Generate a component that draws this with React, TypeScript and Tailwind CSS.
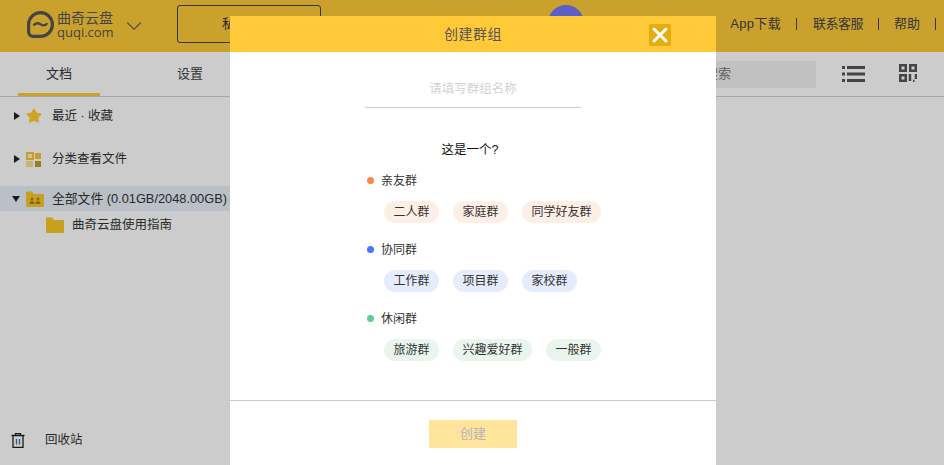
import { Star, ChevronDown, X } from "lucide-react";

const groups = [
  {
    name: "亲友群",
    dot: "bg-[#ff8844]",
    chip: "bg-[#fdefe6]",
    items: [
      ["二人群", "w-[55px]"],
      ["家庭群", "w-[55px]"],
      ["同学好友群", "w-[79px]"],
    ],
  },
  {
    name: "协同群",
    dot: "bg-[#4477ff]",
    chip: "bg-[#e4ecfd]",
    items: [
      ["工作群", "w-[55px]"],
      ["项目群", "w-[55px]"],
      ["家校群", "w-[55px]"],
    ],
  },
  {
    name: "休闲群",
    dot: "bg-[#5ccf8f]",
    chip: "bg-[#e8f6ee]",
    items: [
      ["旅游群", "w-[55px]"],
      ["兴趣爱好群", "w-[79px]"],
      ["一般群", "w-[55px]"],
    ],
  },
];

function Logo() {
  return (
    <div className="mt-[11px] flex items-start gap-[3px] self-start">
      <svg width="27" height="27" viewBox="0 0 27 27" fill="none" stroke="#555" strokeWidth="3.2">
        <path d="M13.500 1.600c6.600 0 11.900 5.300 11.900 11.900s-5.300 11.900-11.900 11.900H6a4.400 4.400 0 0 1-4.400-4.400v-7.500C1.600 6.900 6.900 1.600 13.500 1.600Z" />
        <path d="M6.500 14.500c2-2.800 4.300-2.800 7-1.200s5 1.600 7-1.200" strokeWidth="2.200" />
      </svg>
      <div className="flex w-[56px] flex-col text-[#555]">
        <span className="text-[14px] leading-[15px]">曲奇云盘</span>
        <span className="font-['Open_Sans',sans-serif] text-[13px] leading-[13px]">quqi.com</span>
      </div>
    </div>
  );
}

function Caret({ open }: { open?: boolean }) {
  return open ? (
    <span className="h-0 w-0 border-x-[4.5px] border-t-[6px] border-x-transparent border-t-[#222]" />
  ) : (
    <span className="h-0 w-0 border-y-[4.5px] border-l-[6px] border-y-transparent border-l-[#222]" />
  );
}

function Folder({ people }: { people?: boolean }) {
  return (
    <svg width="18" height="16" viewBox="0 0 18 16">
      <path d="M0 1.500A1 1 0 0 1 1 .500h5l2 2.500h9a1 1 0 0 1 1 1v11a1 1 0 0 1-1 1H1a1 1 0 0 1-1-1Z" fill="#f9c825" />
      {people && (
        <g fill="#a8851c">
          <circle cx="6" cy="8" r="1.500" />
          <path d="M3.500 13c0-4 5-4 5 0Z" />
          <circle cx="12" cy="8" r="1.500" />
          <path d="M9.500 13c0-4 5-4 5 0Z" />
        </g>
      )}
    </svg>
  );
}

function ListIcon() {
  return (
    <svg width="23" height="16" viewBox="0 0 23 16" fill="#555">
      <rect x="0" y="0" width="3" height="3" />
      <rect x="5" y="0" width="18" height="3" />
      <rect x="0" y="6.500" width="3" height="3" />
      <rect x="5" y="6.500" width="18" height="3" />
      <rect x="0" y="13" width="3" height="3" />
      <rect x="5" y="13" width="18" height="3" />
    </svg>
  );
}

function GridIcon() {
  return (
    <svg width="18" height="18" viewBox="0 0 18 18" fill="none" stroke="#555" strokeWidth="2.500">
      <rect x="1.250" y="1.250" width="5.500" height="5.500" />
      <rect x="11.250" y="1.250" width="5.500" height="5.500" />
      <rect x="1.250" y="11.250" width="5.500" height="5.500" />
      <path d="M11 10v7M14 17h1.500M17 10v5" />
    </svg>
  );
}

function TrashIcon() {
  return (
    <svg width="14" height="15" viewBox="0 0 14 15" fill="none" stroke="#222" strokeWidth="1.300">
      <path d="M.500 2.500h13M4.500 2.500V.700h5v1.800M2 2.500v11.800h10V2.500" />
      <path d="M5.500 6v5.500M8.500 6v5.500" stroke="#3b6ea8" />
    </svg>
  );
}

function ClassifyIcon() {
  return (
    <svg width="15" height="15" viewBox="0 0 15 15">
      <rect x="1" y="1" width="6" height="6" fill="#fff3c4" stroke="#f5c836" strokeWidth="2" />
      <rect x="9" y="1" width="6" height="6" fill="#f5c836" />
      <rect x="0" y="9" width="7" height="6" fill="#fbe08a" />
      <rect x="9" y="9" width="6" height="6" fill="#c79c20" />
    </svg>
  );
}

export default function App() {
  return (
    <div className="relative flex h-[465px] w-[944px] flex-col overflow-hidden bg-white font-['Liberation_Sans','Noto_Sans_CJK_SC',sans-serif] text-[13px] text-[#333]">
      <header className="flex h-[52px] shrink-0 items-center bg-[#fdca37] pl-[27px]">
        <Logo />
        <ChevronDown className="ml-[8px] h-[26px] w-[26px] text-[#666]" strokeWidth={1} />
        <button className="ml-[30px] h-[38px] w-[144px] -translate-y-[2px] rounded-[3px] border border-[#444] pl-[44px] text-left text-[13px] text-[#333]">
          私密群组
        </button>
        <div className="mt-[5px] ml-[227px] h-[36px] w-[36px] self-start rounded-full bg-[#7377f8]" />
        <nav className="ml-auto flex -translate-y-[2px] items-center pr-[8px] text-[13px] text-[#444]">
          <span className="tracking-[0.3px]">App下载</span>
          <span className="mr-[16px] ml-[15px] h-[12px] w-px bg-[#444]" />
          <span className="tracking-[-0.5px]">联系客服</span>
          <span className="mx-[15px] h-[12px] w-px bg-[#444]" />
          <span>帮助</span>
          <span className="ml-[15px] h-[12px] w-px bg-[#444]" />
        </nav>
      </header>

      <div className="flex h-[45px] shrink-0 items-center border-b border-[#d0d0d0] bg-white">
        <div className="ml-[18px] flex h-[44px] w-[82px] items-center justify-center border-b-[3px] border-[#fdca37] pt-[2px]">
          文档
        </div>
        <div className="ml-[68px] w-[44px] text-center text-[#444]">设置</div>
        <div className="ml-auto flex h-[27px] w-[200px] items-center justify-end bg-[#f2f2f2] pr-[85px] text-[#777]">
          搜索
        </div>
        <div className="ml-[26px]">
          <ListIcon />
        </div>
        <div className="mr-[27px] ml-[34px] -translate-y-[1px]">
          <GridIcon />
        </div>
      </div>

      <aside className="flex w-[230px] flex-1 flex-col pt-[9px] pb-[15px] text-[12.5px]">
        <div className="flex h-[20px] items-center pl-[14px]">
          <Caret />
          <Star className="ml-[6px] h-[16px] w-[16px] fill-[#ffcf33] text-[#ffcf33]" />
          <span className="ml-[10px]">最近 · 收藏</span>
        </div>
        <div className="mt-[23px] flex h-[20px] items-center pl-[14px]">
          <Caret />
          <span className="ml-[6px]">
            <ClassifyIcon />
          </span>
          <span className="ml-[11px]">分类查看文件</span>
        </div>
        <div className="mt-[17px] flex h-[25px] items-center bg-[#e8f0fa] pl-[12px]">
          <Caret open />
          <span className="ml-[6px]">
            <Folder people />
          </span>
          <span className="ml-[8px] text-[12.8px] whitespace-nowrap">全部文件 (0.01GB/2048.00GB)</span>
        </div>
        <div className="mt-[4px] flex h-[20px] items-center pl-[46px]">
          <Folder />
          <span className="ml-[8px]">曲奇云盘使用指南</span>
        </div>
        <div className="mt-auto flex h-[20px] items-center pl-[11px]">
          <TrashIcon />
          <span className="ml-[20px]">回收站</span>
        </div>
      </aside>

      <div className="absolute inset-0 bg-black/20" />

      <div className="absolute top-[16px] left-[230px] flex h-[470px] w-[486px] flex-col bg-white">
        <div className="relative flex h-[36px] shrink-0 items-center justify-center bg-[#ffc938] text-[14px] tracking-[0.5px] text-[#555]">
          创建群组
          <span className="absolute top-[8px] right-[45px] flex h-[22px] w-[22px] items-center justify-center rounded-[2px] bg-[#e6ad0e]">
            <X className="h-[24px] w-[24px] shrink-0 text-white" strokeWidth={3} />
          </span>
        </div>

        <div className="mx-auto mt-[28px] flex h-[28px] w-[216px] shrink-0 items-start justify-center border-b border-[#ccc] text-[12.5px] text-[#d3d3d3]">
          请填写群组名称
        </div>

        <p className="mt-[33px] pr-[6px] text-center text-[12.5px] text-[#111]">这是一个?</p>

        <div className="mt-[11px] flex flex-col gap-[17px] pl-[137px]">
          {groups.map((g) => (
            <section key={g.name}>
              <div className="flex h-[20px] items-center text-[12px]">
                <span className={`h-[7px] w-[7px] rounded-full ${g.dot}`} />
                <span className="ml-[7px]">{g.name}</span>
              </div>
              <div className="mt-[10px] ml-[17px] flex gap-[14px]">
                {g.items.map(([label, w]) => (
                  <span
                    key={label}
                    className={`flex h-[22px] items-center justify-center rounded-full text-[12px] ${g.chip} ${w}`}
                  >
                    {label}
                  </span>
                ))}
              </div>
            </section>
          ))}
        </div>

        <div className="mt-[39px] flex flex-col items-center border-t border-[#ccc] pt-[19px]">
          <button className="h-[28px] w-[88px] bg-[#ffe49b] text-[13px] text-[#b5b5b5]">创建</button>
        </div>
      </div>
    </div>
  );
}
